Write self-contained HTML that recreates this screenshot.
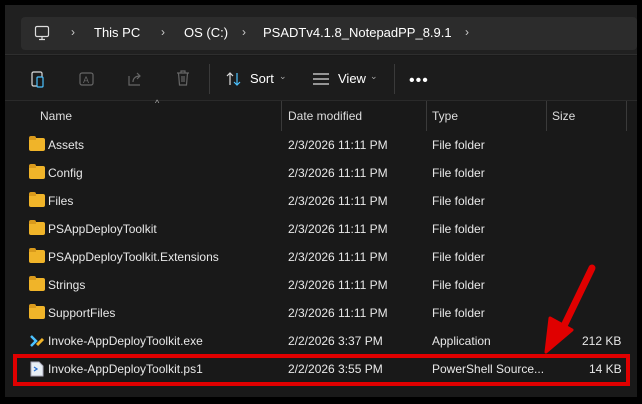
<!DOCTYPE html>
<html><head><style>
*{margin:0;padding:0;box-sizing:border-box}
body{width:642px;height:404px;background:#000;font-family:"Liberation Sans",sans-serif;color:#fff;font-size:12px;position:relative;overflow:hidden}
.win{position:absolute;left:5px;top:5px;width:632px;height:392px;background:#191919}
.top{position:absolute;left:0;top:0;width:632px;height:50px;background:#202020;border-bottom:1px solid #2e2e2e}
.crumb{position:absolute;left:16px;top:12px;width:616px;height:33px;background:#2c2c2c;border-radius:4px}
.t{position:absolute;white-space:nowrap}
.tool{position:absolute;left:0;top:51px;width:632px;height:45px;background:#1c1c1c;border-bottom:1px solid #2a2a2a}
.vl{position:absolute;top:96px;width:1px;height:30px;background:#3a3a3a}
.row{position:absolute;left:0;width:632px;height:28px}
.row span{position:absolute;top:7px;white-space:nowrap;color:#e8e8e8}
.fold{position:absolute;left:24px;top:7px;width:16px;height:13px;background:#f0b429;border-radius:2px}
.fold:before{content:"";position:absolute;left:0;top:-2px;width:7px;height:4px;background:#d99a1c;border-radius:2px 2px 0 0}
</style></head><body>
<div class="win">
<div class="top">
 <div class="crumb">
  <svg class="t" style="left:13px;top:8px" width="16" height="16" viewBox="0 0 16 16"><rect x="1.5" y="1.5" width="13" height="10" rx="1.5" fill="none" stroke="#ddd" stroke-width="1.2"/><path d="M5 14.5h6M8 11.5v3" stroke="#ddd" stroke-width="1.2"/></svg>
  <span class="t" style="left:50px;top:8px;color:#ccc">›</span>
  <span class="t" style="left:73px;top:8px;font-size:13px">This PC</span>
  <span class="t" style="left:140px;top:8px;color:#ccc">›</span>
  <span class="t" style="left:163px;top:8px;font-size:13px">OS (C:)</span>
  <span class="t" style="left:221px;top:8px;color:#ccc">›</span>
  <span class="t" style="left:242px;top:8px;font-size:13px">PSADTv4.1.8_NotepadPP_8.9.1</span>
  <span class="t" style="left:444px;top:8px;color:#ccc">›</span>
 </div>
</div>
<div class="tool">
 <svg class="t" style="left:25px;top:14px" width="16" height="18" viewBox="0 0 16 18"><rect x="2" y="2" width="10" height="14" rx="1.5" fill="none" stroke="#ddd" stroke-width="1.2"/><rect x="7" y="7" width="6" height="10" rx="1" fill="#191919" stroke="#4cc2ff" stroke-width="1.2"/></svg>
 <svg class="t" style="left:73px;top:14px" width="18" height="18" viewBox="0 0 18 18"><rect x="2" y="3" width="13" height="12" rx="2" fill="none" stroke="#666" stroke-width="1.2"/><text x="5" y="13" font-size="9" fill="#666" font-family="Liberation Sans">A</text></svg>
 <svg class="t" style="left:121px;top:14px" width="18" height="18" viewBox="0 0 18 18"><path d="M3 6v9h11M7 12c0-4 3-6 7-6M11 3l3 3-3 3" fill="none" stroke="#666" stroke-width="1.2"/></svg>
 <svg class="t" style="left:170px;top:13px" width="16" height="18" viewBox="0 0 16 18"><path d="M2 4h12M6 4V2h4v2M3.5 4l1 12h7l1-12M7 7v6M9 7v6" fill="none" stroke="#666" stroke-width="1.2"/></svg>
 <div class="t" style="left:204px;top:8px;width:1px;height:30px;background:#3a3a3a"></div>
 <svg class="t" style="left:221px;top:15px" width="16" height="16" viewBox="0 0 16 16"><path d="M4 14V2M1 5l3-3 3 3" fill="none" stroke="#ddd" stroke-width="1.2"/><path d="M11 2v12M8 11l3 3 3-3" fill="none" stroke="#4cc2ff" stroke-width="1.2"/></svg>
 <span class="t" style="left:245px;top:15px;font-size:13px">Sort</span><span class="t" style="left:274px;top:15px;font-size:9px;color:#aaa">⌄</span>
 <svg class="t" style="left:308px;top:17px" width="16" height="12" viewBox="0 0 16 12"><path d="M0 1h16M0 6h16M0 11h16" stroke="#ddd" stroke-width="1.2"/></svg>
 <span class="t" style="left:333px;top:15px;font-size:13px">View</span><span class="t" style="left:365px;top:15px;font-size:9px;color:#aaa">⌄</span>
 <div class="t" style="left:389px;top:8px;width:1px;height:30px;background:#3a3a3a"></div>
 <span class="t" style="left:404px;top:16px;font-size:16px;letter-spacing:1px">•••</span>
</div>
<span class="t" style="left:150px;top:93px;font-size:9px;color:#aaa">^</span>
<span class="t" style="left:35px;top:104px;color:#ddd">Name</span>
<div class="vl" style="left:276px"></div>
<span class="t" style="left:283px;top:104px;color:#ddd">Date modified</span>
<div class="vl" style="left:421px"></div>
<span class="t" style="left:427px;top:104px;color:#ddd">Type</span>
<div class="vl" style="left:541px"></div>
<span class="t" style="left:547px;top:104px;color:#ddd">Size</span>
<div class="vl" style="left:621px"></div>

<div class="row" style="top:126px"><div class="fold"></div><span style="left:43px">Assets</span><span style="left:283px">2/3/2026 11:11 PM</span><span style="left:427px">File folder</span></div>
<div class="row" style="top:154px"><div class="fold"></div><span style="left:43px">Config</span><span style="left:283px">2/3/2026 11:11 PM</span><span style="left:427px">File folder</span></div>
<div class="row" style="top:182px"><div class="fold"></div><span style="left:43px">Files</span><span style="left:283px">2/3/2026 11:11 PM</span><span style="left:427px">File folder</span></div>
<div class="row" style="top:210px"><div class="fold"></div><span style="left:43px">PSAppDeployToolkit</span><span style="left:283px">2/3/2026 11:11 PM</span><span style="left:427px">File folder</span></div>
<div class="row" style="top:238px"><div class="fold"></div><span style="left:43px">PSAppDeployToolkit.Extensions</span><span style="left:283px">2/3/2026 11:11 PM</span><span style="left:427px">File folder</span></div>
<div class="row" style="top:266px"><div class="fold"></div><span style="left:43px">Strings</span><span style="left:283px">2/3/2026 11:11 PM</span><span style="left:427px">File folder</span></div>
<div class="row" style="top:294px"><div class="fold"></div><span style="left:43px">SupportFiles</span><span style="left:283px">2/3/2026 11:11 PM</span><span style="left:427px">File folder</span></div>
<div class="row" style="top:322px"><svg style="position:absolute;left:24px;top:6px" width="16" height="16" viewBox="0 0 16 16"><path d="M2 3l5 5-5 5" fill="none" stroke="#4cc2ff" stroke-width="2.5"/><path d="M8 12l6-6" stroke="#f0b429" stroke-width="3"/></svg><span style="left:43px">Invoke-AppDeployToolkit.exe</span><span style="left:283px">2/2/2026 3:37 PM</span><span style="left:427px">Application</span><span style="left:577px">212 KB</span></div>
<div class="row" style="top:350px"><svg style="position:absolute;left:25px;top:6px" width="14" height="16" viewBox="0 0 14 16"><path d="M1 1h8l4 4v10H1z" fill="#e8eef5" stroke="#aab"/><path d="M4 6l3 2-3 2" fill="none" stroke="#2a6fd0" stroke-width="1.3"/></svg><span style="left:43px">Invoke-AppDeployToolkit.ps1</span><span style="left:283px">2/2/2026 3:55 PM</span><span style="left:427px">PowerShell Source...</span><span style="left:584px">14 KB</span></div>
</div>
<div style="position:absolute;left:13px;top:354px;width:617px;height:32px;border:4px solid #e00000"></div>
<svg style="position:absolute;left:0;top:0" width="642" height="404"><path d="M592 268L562 330" stroke="#e00000" stroke-width="7" stroke-linecap="round"/><path d="M546 352L550 318L572 330Z" fill="#e00000" stroke="#e00000" stroke-width="3" stroke-linejoin="round"/></svg>
</body></html>
